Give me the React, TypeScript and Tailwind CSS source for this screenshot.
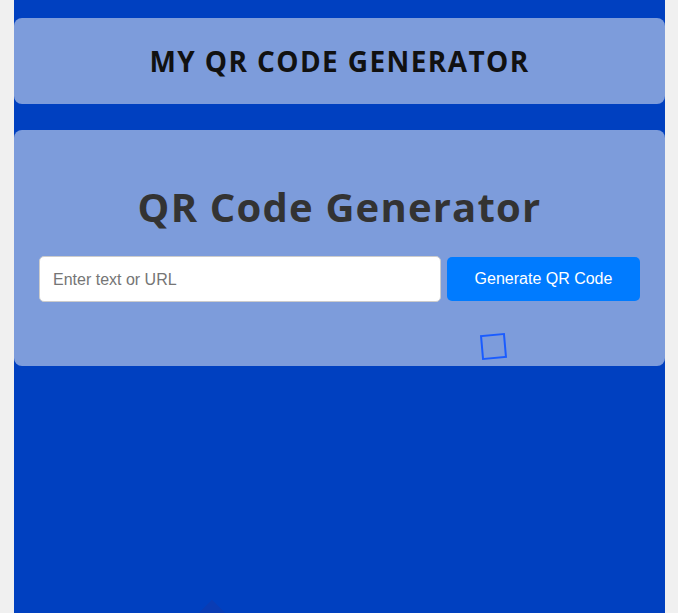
import React from 'react';

function App() {
  return (
    <div className="flex h-[613px] w-full bg-[#f0f0f0] pl-[14px] pr-[13px]">
      <div className="flex h-full w-full flex-col overflow-hidden bg-[#0040c0] pt-[18px]">
        <header className="flex h-[86px] shrink-0 items-center justify-center rounded-lg bg-[#7d9cdb]">
          <h2 className="font-['Open_Sans',sans-serif] text-[28px] font-bold tracking-[1.4px] text-[#111]">
            MY QR CODE GENERATOR
          </h2>
        </header>

        <main className="mt-[26px] flex h-[236px] shrink-0 flex-col rounded-lg bg-[#7d9cdb] px-[25px] pt-[53px]">
          <h1 className="text-center font-['Open_Sans',sans-serif] text-[40px] leading-[48px] font-bold tracking-[1.2px] text-[#333]">
            QR Code Generator
          </h1>
          <div className="mt-[25px] flex items-center gap-[6px]">
            <input
              type="text"
              placeholder="Enter text or URL"
              className="h-[46px] w-[402px] rounded-[5px] border border-[#ccc] bg-white px-[13px] pt-[1px] font-['Liberation_Sans',Arial,sans-serif] text-base text-[#333] placeholder:text-[#757575] focus:outline-none"
            />
            <button
              type="button"
              className="h-[44px] flex-1 rounded-[5px] bg-[#007bff] font-['Liberation_Sans',Arial,sans-serif] text-base text-white"
            >
              Generate QR Code
            </button>
          </div>
          <div className="mt-[32px] ml-[442px] h-[25px] w-[25px] rotate-[-5deg] border-2 border-[#1a5cff]" />
        </main>

        <div className="mt-[238px] ml-[188px] h-5 w-5 shrink-0 rotate-45 bg-[#0a3cb4]" />
      </div>
    </div>
  );
}

export default App;
